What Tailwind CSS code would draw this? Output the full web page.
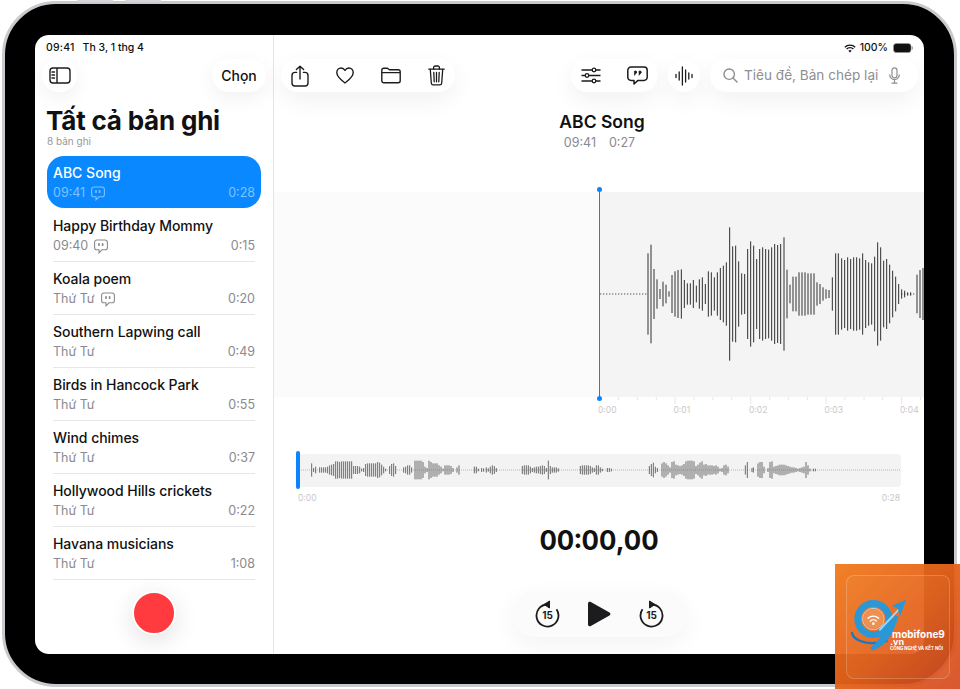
<!DOCTYPE html>
<html lang="vi">
<head>
<meta charset="utf-8">
<title>Ghi âm</title>
<script src="https://cdn.jsdelivr.net/npm/@tailwindcss/browser@4"></script>
</head>
<body class="bg-white font-['Inter','Noto_Sans',sans-serif] text-[#111]">
<div class="relative w-[960px] h-[689px] overflow-hidden">
  <div class="absolute left-[77px] top-0 w-[36px] h-[2px] bg-[#d6d6da]"></div>
  <div class="absolute left-[125px] top-0 w-[36px] h-[2px] bg-[#d6d6da]"></div>

  <div class="ml-[2px] mt-[1px] w-[955px] h-[686px] rounded-[54px] border-[3px] border-[#c9c9ce] bg-black pl-[30px] pt-[31px]">
    <div class="flex w-[889px] h-[619px] rounded-[14px] overflow-hidden bg-white">

      <!-- Sidebar -->
      <aside class="w-[239px] shrink-0 border-r border-[#e6e6e6] flex flex-col">
        <div class="h-[24px] pl-[11px] pt-[6px] flex gap-[8px] text-[10.5px] font-medium leading-[14px]">
          <span class="tracking-[0.2px]">09:41</span><span>Th 3, 1 thg 4</span>
        </div>
        <div class="h-[33px] pl-[7px] pr-[7px] flex justify-between">
          <button class="w-[35px] h-[33px] rounded-full bg-white shadow-[0_6px_20px_rgba(0,0,0,0.06)] flex items-center justify-center">
            <svg width="22" height="17" viewBox="0 0 22 17" fill="none" stroke="#1c1c1e" stroke-width="1.4"><rect x="1" y="1" width="20" height="15" rx="3"/><path d="M8 1V16"/><path d="M3 5H5.5M3 8H5.5M3 11H5.5" stroke-linecap="round"/></svg>
          </button>
          <button class="w-[54px] h-[33px] rounded-full bg-white shadow-[0_6px_20px_rgba(0,0,0,0.06)] text-[14px] font-medium">Chọn</button>
        </div>
        <h1 class="mt-[14px] ml-[11px] text-[26px] leading-[30px] font-bold tracking-[-0.2px] whitespace-nowrap">Tất cả bản ghi</h1>
        <p class="ml-[12px] text-[10px] leading-[10px] text-[#999]">8 bản ghi</p>

        <ul class="mt-[10px] mx-[12px] w-[214px]">
          <li class="h-[53px]">
            <div class="h-[52px] rounded-[17px] bg-[#0a88ff] pl-[6px] pr-[6px] pt-[8px]">
              <div class="text-[14px] leading-[18px] font-medium text-white">ABC Song</div>
              <div class="flex items-center mt-[2px] h-[18px] text-[12.5px] text-[#80c2ff]">
                <span>09:41</span>
                <svg class="ml-[6px]" width="14" height="15" viewBox="0 0 14 15" fill="none" stroke="#80c2ff" stroke-width="1.1"><path d="M3 1H11A2.4 2.4 0 0 1 13.4 3.4V8.4A2.4 2.4 0 0 1 11 10.8H8L5 13.8V10.8H3A2.4 2.4 0 0 1 .6 8.4V3.4A2.4 2.4 0 0 1 3 1Z"/><path d="M5 4.8V6.200M8.6 4.8V6.200" stroke-width="1.7" stroke-linecap="round"/></svg>
                <span class="ml-auto">0:28</span>
              </div>
            </div>
          </li>
          <li class="h-[53px] px-[6px]">
            <div class="h-full border-b border-[#e6e6e6] pt-[8px]">
              <div class="text-[14px] leading-[18px] font-medium tracking-[-0.05px]">Happy Birthday Mommy</div>
              <div class="flex items-center mt-[2px] h-[18px] text-[12.5px] text-[#8a8a8e]">
                <span>09:40</span>
                <svg class="ml-[6px]" width="14" height="15" viewBox="0 0 14 15" fill="none" stroke="#8a8a8e" stroke-width="1.1"><path d="M3 1H11A2.4 2.4 0 0 1 13.4 3.4V8.4A2.4 2.4 0 0 1 11 10.8H8L5 13.8V10.8H3A2.4 2.4 0 0 1 .6 8.4V3.4A2.4 2.4 0 0 1 3 1Z"/><path d="M5 4.8V6.200M8.6 4.8V6.200" stroke-width="1.7" stroke-linecap="round"/></svg>
                <span class="ml-auto">0:15</span>
              </div>
            </div>
          </li>
          <li class="h-[53px] px-[6px]">
            <div class="h-full border-b border-[#e6e6e6] pt-[8px]">
              <div class="text-[14px] leading-[18px] font-medium tracking-[-0.05px]">Koala poem</div>
              <div class="flex items-center mt-[2px] h-[18px] text-[12.5px] text-[#8a8a8e]">
                <span>Thứ Tư</span>
                <svg class="ml-[6px]" width="14" height="15" viewBox="0 0 14 15" fill="none" stroke="#8a8a8e" stroke-width="1.1"><path d="M3 1H11A2.4 2.4 0 0 1 13.4 3.4V8.4A2.4 2.4 0 0 1 11 10.8H8L5 13.8V10.8H3A2.4 2.4 0 0 1 .6 8.4V3.4A2.4 2.4 0 0 1 3 1Z"/><path d="M5 4.8V6.200M8.6 4.8V6.200" stroke-width="1.7" stroke-linecap="round"/></svg>
                <span class="ml-auto">0:20</span>
              </div>
            </div>
          </li>
          <li class="h-[53px] px-[6px]">
            <div class="h-full border-b border-[#e6e6e6] pt-[8px]">
              <div class="text-[14px] leading-[18px] font-medium tracking-[-0.05px]">Southern Lapwing call</div>
              <div class="flex items-center justify-between mt-[2px] h-[18px] text-[12.5px] text-[#8a8a8e]"><span>Thứ Tư</span><span>0:49</span></div>
            </div>
          </li>
          <li class="h-[53px] px-[6px]">
            <div class="h-full border-b border-[#e6e6e6] pt-[8px]">
              <div class="text-[14px] leading-[18px] font-medium tracking-[-0.05px]">Birds in Hancock Park</div>
              <div class="flex items-center justify-between mt-[2px] h-[18px] text-[12.5px] text-[#8a8a8e]"><span>Thứ Tư</span><span>0:55</span></div>
            </div>
          </li>
          <li class="h-[53px] px-[6px]">
            <div class="h-full border-b border-[#e6e6e6] pt-[8px]">
              <div class="text-[14px] leading-[18px] font-medium tracking-[-0.05px]">Wind chimes</div>
              <div class="flex items-center justify-between mt-[2px] h-[18px] text-[12.5px] text-[#8a8a8e]"><span>Thứ Tư</span><span>0:37</span></div>
            </div>
          </li>
          <li class="h-[53px] px-[6px]">
            <div class="h-full border-b border-[#e6e6e6] pt-[8px]">
              <div class="text-[14px] leading-[18px] font-medium tracking-[-0.05px]">Hollywood Hills crickets</div>
              <div class="flex items-center justify-between mt-[2px] h-[18px] text-[12.5px] text-[#8a8a8e]"><span>Thứ Tư</span><span>0:22</span></div>
            </div>
          </li>
          <li class="h-[53px] px-[6px]">
            <div class="h-full border-b border-[#e6e6e6] pt-[8px]">
              <div class="text-[14px] leading-[18px] font-medium tracking-[-0.05px]">Havana musicians</div>
              <div class="flex items-center justify-between mt-[2px] h-[18px] text-[12.5px] text-[#8a8a8e]"><span>Thứ Tư</span><span>1:08</span></div>
            </div>
          </li>
        </ul>
        <div class="flex justify-center pt-[11px]">
          <button class="w-[44px] h-[44px] rounded-full bg-[#ff3b40] border-2 border-white shadow-[0_6px_24px_rgba(0,0,0,0.12)]"></button>
        </div>
      </aside>

      <!-- Main -->
      <main class="flex-1 flex flex-col min-w-0">
        <div class="h-[24px] pt-[2px] pr-[11px] flex items-center justify-end gap-[3px] text-[10.5px] font-medium">
          <svg width="12" height="9" viewBox="0 0 12 9" fill="none" stroke="#111" stroke-width="1.3"><path d="M.8 3.2A7.4 7.4 0 0 1 11.2 3.2"/><path d="M2.6 5A4.8 4.8 0 0 1 9.4 5"/><path d="M6 8.6 4.4 6.8A2.2 2.2 0 0 1 7.6 6.8Z" fill="#111" stroke="none"/></svg>
          <span class="leading-[14px] ml-[1px]">100%</span>
          <svg class="ml-[2px]" width="20" height="10" viewBox="0 0 20 10"><rect x=".5" y=".5" width="17.5" height="9" rx="2.8" fill="#111" stroke="#999" stroke-width=".6"/><rect x="18.6" y="3.3" width="1.2" height="3.4" rx=".6" fill="#999"/></svg>
        </div>

        <div class="h-[33px] pl-[7px] pr-[6px] flex">
          <div class="w-[174px] h-[33px] rounded-full bg-white px-[10px] flex items-center justify-between shadow-[0_8px_24px_rgba(0,0,0,0.06)]">
            <svg width="18" height="22" viewBox="0 0 18 22" fill="none" stroke="#1c1c1e" stroke-width="1.4" stroke-linecap="round" stroke-linejoin="round"><path d="M5.6 7.4H4A3 3 0 0 0 1 10.4V18A3 3 0 0 0 4 21H14A3 3 0 0 0 17 18V10.4A3 3 0 0 0 14 7.4H12.4"/><path d="M9 14V1.4M5.4 4.6 9 1.2 12.6 4.6"/></svg>
            <svg width="18" height="17" viewBox="0 0 18 17" fill="none" stroke="#1c1c1e" stroke-width="1.4" stroke-linejoin="round"><path d="M9 16C5.5 13.4.8 10.2.8 5.6.8 2.9 2.8 1 5.1 1 6.9 1 8.2 2 9 3.5 9.8 2 11.100 1 12.900 1 15.200 1 17.200 2.900 17.200 5.600 17.200 10.200 12.500 13.400 9 16Z"/></svg>
            <svg width="20" height="17" viewBox="0 0 20 17" fill="none" stroke="#1c1c1e" stroke-width="1.4" stroke-linejoin="round"><path d="M.8 3.200A2 2 0 0 1 2.800 1.200H6.400L8.400 2.800H17.200A2 2 0 0 1 19.200 4.800V13.800A2 2 0 0 1 17.200 15.800H2.800A2 2 0 0 1 .8 13.800Z"/><path d="M.8 5.600H19.200"/></svg>
            <svg width="17" height="21" viewBox="0 0 17 21" fill="none" stroke="#1c1c1e" stroke-width="1.3" stroke-linecap="round" stroke-linejoin="round"><path d="M.8 4.200H16.200"/><path d="M5.600 4V2.600A1.600 1.600 0 0 1 7.200 1H9.800A1.600 1.600 0 0 1 11.400 2.600V4"/><path d="M2.300 4.400 3.300 18A2 2 0 0 0 5.300 19.900H11.700A2 2 0 0 0 13.700 18L14.700 4.400"/><path d="M5.800 7.500 6.200 16.800M8.500 7.500V16.800M11.200 7.500 10.800 16.800"/></svg>
          </div>
          <div class="ml-auto w-[87px] h-[33px] rounded-full bg-white px-[10px] flex items-center justify-between shadow-[0_8px_24px_rgba(0,0,0,0.06)]">
            <svg width="20" height="17" viewBox="0 0 20 17" fill="none" stroke="#1c1c1e" stroke-width="1.3"><path d="M.5 3H11.200M14.800 3H19.500M.5 8.500H4.200M7.800 8.500H19.500M.5 14H11.200M14.800 14H19.500"/><circle cx="13" cy="3" r="1.800"/><circle cx="6" cy="8.500" r="1.800"/><circle cx="13" cy="14" r="1.800"/></svg>
            <svg width="21" height="19" viewBox="0 0 21 19" fill="none" stroke="#1c1c1e" stroke-width="1.5" stroke-linejoin="round"><path d="M4 1H17A3.200 3.200 0 0 1 20.200 4.200V11.200A3.200 3.200 0 0 1 17 14.400H11L7 18V14.400H4A3.200 3.200 0 0 1 .8 11.200V4.200A3.200 3.200 0 0 1 4 1Z"/><path d="M7.200 6.200A1.200 1.200 0 1 1 8.600 7.400C8.500 8.200 8 8.800 7.200 9.200M11.800 6.200A1.200 1.200 0 1 1 13.200 7.400C13.100 8.200 12.600 8.800 11.800 9.200" fill="#1c1c1e" stroke-width="1"/></svg>
          </div>
          <div class="ml-[10px] w-[32px] h-[33px] rounded-full bg-white flex items-center justify-center shadow-[0_8px_24px_rgba(0,0,0,0.06)]">
            <svg width="18" height="20" viewBox="0 0 18 20" fill="none" stroke="#1c1c1e" stroke-width="1.300" stroke-linecap="round"><path d="M1 8.500V11.500M4.200 6V14M7.400 1V19M10.600 4V16M13.800 7V13M17 8.500V11.500"/></svg>
          </div>
          <div class="ml-[10px] w-[208px] h-[33px] rounded-full bg-white pl-[13px] pr-[18px] flex items-center shadow-[0_8px_24px_rgba(0,0,0,0.06)]">
            <svg width="15" height="15" viewBox="0 0 15 15" fill="none" stroke="#8e8e93" stroke-width="1.400" stroke-linecap="round"><circle cx="6.200" cy="6.200" r="5.200"/><path d="M10 10 14 14"/></svg>
            <span class="ml-[6px] text-[13.6px] text-[#8e8e93] whitespace-nowrap">Tiêu đề, Bản chép lại</span>
            <svg class="ml-auto" width="11" height="17" viewBox="0 0 11 17" fill="none" stroke="#8e8e93" stroke-width="1.200" stroke-linecap="round"><rect x="3" y=".8" width="5" height="10" rx="2.500"/><path d="M.7 7.800A4.800 4.800 0 0 0 10.300 7.800M5.500 12.800V16M3 16.200H8"/></svg>
          </div>
        </div>

        <div class="pl-[6px] mt-[18px] text-center text-[17.5px] leading-[24px] font-semibold">ABC Song</div>
        <div class="mt-[2px] flex justify-center gap-[13px] text-[12.5px] leading-[14px] text-[#8a8a8e] pl-[1px]">
          <span>09:41</span><span>0:27</span>
        </div>

        <!-- Waveform -->
        <div class="relative mt-[42px] h-[205px] flex">
          <div class="w-[326px] bg-[#fbfbfb]"></div>
          <div class="flex-1 bg-[#f4f4f4] overflow-hidden">
            <svg width="324" height="205" viewBox="30 36 972 615" fill="none">
              <path d="M30 342H170" stroke="#555" stroke-width="3" stroke-dasharray="4 5"/>
              <path d="M933 342H975" stroke="#555" stroke-width="3" stroke-dasharray="4 5"/>
              <path stroke="#303030" stroke-width="3" d="M174 220V464M183 194V490M192 267V417M201 298V386M210 327V357M219 305V379M228 314V370M237 334V350M246 285V399M255 274V410M264 270V414M274 268V416M283 300V384M292 310V374M301 310V374M310 300V384M319 317V367M328 298V386M337 292V392M346 312V372M355 274V410M364 277V407M373 292V392M382 277V407M391 264V420M400 257V427M409 247V437M419 142V542M428 199V485M437 197V487M446 244V440M455 280V404M464 282V402M473 207V477M482 184V500M491 197V487M500 237V447M509 207V477M518 202V482M527 207V477M536 209V475M545 202V482M554 192V492M563 195V489M572 192V492M582 172V512M591 269V415M600 314V370M609 290V394M618 290V394M627 277V407M636 277V407M645 277V407M654 280V404M663 280V404M672 280V404M681 307V377M690 312V372M699 322V362M708 328V356M717 330V354M727 292V392M737 220V464M745 220V464M755 235V449M764 240V444M773 232V452M782 237V447M791 232V452M800 232V452M809 235V449M818 220V464M827 240V444M836 247V437M845 250V434M854 230V454M863 187V497M872 202V482M881 242V442M890 237V447M899 254V430M908 272V412M917 290V394M926 312V372M935 328V356M944 332V352M953 337V347M962 337V347M981 284V400M990 270V414M999 264V420"/>
            </svg>
          </div>
          <div class="absolute left-[325px] -top-[3px] h-[210px] w-[1px] bg-[#0a84ff]">
            <div class="absolute -left-[2px] -top-[2px] w-[5px] h-[5px] rounded-full bg-[#0a84ff]"></div>
            <div class="absolute -left-[2px] -bottom-[2px] w-[5px] h-[5px] rounded-full bg-[#0a84ff]"></div>
          </div>
        </div>

        <!-- Ruler -->
        <div class="relative h-[21px] pl-[324px] pt-[8px] flex text-[8.500px] leading-[10px] text-[#c8c8c8] overflow-hidden">
          <svg class="absolute left-[326px] top-0" width="324" height="7" viewBox="30 651 972 21" fill="none" stroke="#e6e6e6" stroke-width="3"><path d="M85 651V660M142 651V660M199 651V660M255 651V672M312 651V660M369 651V660M425 651V660M482 651V672M539 651V660M595 651V660M652 651V660M708 651V672M765 651V660M822 651V660M878 651V660M935 651V672M992 651V660"/></svg>
          <span class="w-[75.500px] shrink-0">0:00</span>
          <span class="w-[75.500px] shrink-0">0:01</span>
          <span class="w-[75.500px] shrink-0">0:02</span>
          <span class="w-[75.500px] shrink-0">0:03</span>
          <span class="w-[25px] shrink-0">0:04</span>
        </div>

        <!-- Overview -->
        <div class="relative mt-[36px] mx-[23px] h-[33px] rounded-[4px] bg-[#f3f3f3]">
          <svg width="604" height="33" viewBox="36 42 1812 99" fill="none">
            <path d="M48 90H1845" stroke="#777" stroke-width="1.500" stroke-dasharray="3 3"/>
            <path stroke="#5e5e5e" stroke-width="2.700" d="M80 70V110M86 84V96M92 80V100M104 82V98M110 82V98M116 82V98M122 82V98M128 80V100M134 76V104M140 74V106M146 72V108M152 64V116M158 64V116M164 66V114M170 64V116M176 64V116M182 64V116M188 64V116M194 64V116M200 64V116M206 78V102M212 78V102M218 78V102M224 80V100M230 86V94M236 84V96M242 72V108M248 70V110M254 70V110M260 70V110M266 70V110M272 70V110M278 66V114M284 68V112M290 74V106M296 80V100M302 86V94M314 78V102M320 72V108M326 70V110M332 78V102M356 82V98M362 80V100M368 76V104M374 76V104M380 82V98M390 62V118M396 62V118M402 62V118M408 62V118M414 66V114M420 80V100M426 84V96M432 62V118M438 66V114M444 70V110M450 70V110M456 70V110M462 76V104M468 80V100M474 86V94M480 76V104M486 76V104M492 76V104M498 78V102M504 84V96M516 82V98M522 76V104M568 80V100M574 80V100M580 86V94M590 84V96M596 85V95M604 82V98M610 85V95M616 80V100M622 76V104M628 78V102M634 84V96M712 78V102M718 76V104M724 76V104M730 76V104M736 80V100M742 84V96M748 82V98M754 80V100M760 80V100M766 78V102M772 76V104M778 78V102M784 84V96M790 62V118M796 78V102M802 82V98M808 82V98M814 82V98M820 85V95M886 78V102M892 76V104M898 76V104M904 76V104M910 76V104M916 78V102M922 82V98M928 84V96M934 76V104M940 76V104M946 82V98M952 86V94M967 84V96M973 84V96M979 86V94M1093 78V102M1099 72V108M1105 68V112M1111 80V100M1117 84V96M1131 70V110M1137 66V114M1143 70V110M1149 76V104M1155 82V98M1161 66V114M1167 64V116M1173 74V106M1179 76V104M1185 78V102M1191 76V104M1197 72V108M1203 64V116M1209 62V118M1215 62V118M1221 62V118M1227 64V116M1233 78V102M1239 74V106M1245 68V112M1251 64V116M1257 74V106M1263 72V108M1269 76V104M1275 76V104M1281 76V104M1287 78V102M1293 76V104M1299 80V100M1305 86V94M1311 84V96M1317 76V104M1323 74V106M1329 80V100M1381 76V104M1387 66V114M1401 84V96M1405 82V98M1419 70V110M1425 66V114M1431 66V114M1437 80V100M1449 84V96M1455 66V114M1461 64V116M1467 80V100M1473 78V102M1479 76V104M1485 74V106M1491 74V106M1497 74V106M1503 76V104M1509 78V102M1515 80V100M1521 82V98M1527 82V98M1533 84V96M1539 86V94M1545 84V96M1551 82V98M1557 80V100M1563 66V114M1569 76V104M1575 86V94M1585 86V94M1591 86V94"/>
          </svg>
          <div class="absolute -left-[1px] -top-[3px] w-[4px] h-[38px] rounded-full bg-[#0a84ff]"></div>
        </div>
        <div class="mt-[5px] mx-[24px] flex justify-between text-[8.500px] leading-[12px] text-[#c8c8c8]">
          <span>0:00</span><span>0:28</span>
        </div>

        <div class="mt-[20px] text-center text-[27px] leading-[34px] font-bold tabular-nums">00:00,00</div>

        <div class="mt-[33px] mx-auto w-[175px] h-[46px] rounded-full bg-[#fbfbfb] shadow-[0_8px_24px_rgba(0,0,0,0.05)] pl-[23px] pr-[23px] flex items-center justify-between">
          <svg width="25" height="28" viewBox="0 0 25 28" fill="none" stroke="#1c1c1e" stroke-width="1.800"><path d="M12.500 4.500A11 11 0 1 0 21.500 9.200"/><path d="M9 4.500 14.500 1V8Z" fill="#1c1c1e" stroke-linejoin="round" stroke-width="1"/><text x="12.500" y="19" text-anchor="middle" font-size="10" font-weight="700" fill="#1c1c1e" stroke="none">15</text></svg>
          <svg width="24" height="26" viewBox="0 0 24 26"><path d="M1 2.500C1 1 2.500.3 3.800 1L22.500 11.500C23.800 12.200 23.800 13.800 22.500 14.500L3.800 25C2.500 25.700 1 25 1 23.500Z" fill="#1c1c1e"/></svg>
          <svg width="25" height="28" viewBox="0 0 25 28" fill="none" stroke="#1c1c1e" stroke-width="1.800"><path d="M12.500 4.500A11 11 0 1 1 3.500 9.200"/><path d="M16 4.500 10.500 1V8Z" fill="#1c1c1e" stroke-linejoin="round" stroke-width="1"/><text x="12.500" y="19" text-anchor="middle" font-size="10" font-weight="700" fill="#1c1c1e" stroke="none">15</text></svg>
        </div>
      </main>
    </div>
  </div>

  <!-- Watermark badge -->
  <div class="absolute left-[835px] top-[564px] w-[125px] h-[125px] bg-linear-to-br from-[#f07a1c]/95 via-[#e5621a]/95 to-[#d4451a]/90">
    <div class="absolute left-[11px] top-[11px] w-[104px] h-[104px] rounded-[8px] border border-white/20 bg-white/[0.03]"></div>
    <svg class="absolute left-0 top-0" width="125" height="125" viewBox="15 15 375 375" fill="none">
      <path d="M66 222C70 245 115 262 170 246" stroke="#1d78bd" stroke-width="7" stroke-linecap="round"/>
      <circle cx="130" cy="180" r="47" stroke="#2a98d6" stroke-width="20"/>
      <circle cx="130" cy="180" r="32" stroke="#bfe6f7" stroke-width="2.500"/>
      <circle cx="130" cy="180" r="30" fill="#ee9150"/>
      <path d="M114 178A23 23 0 0 1 146 178M121 186A12 12 0 0 1 139 186" stroke="#fff" stroke-width="4" stroke-linecap="round"/>
      <circle cx="130" cy="194" r="4" fill="#fff"/>
      <path d="M177 186C172 220 150 250 128 268C165 254 184 222 200 170" stroke="#2a98d6" stroke-width="12" stroke-linejoin="round" fill="#2a98d6"/>
      <path d="M150 212 206 152" stroke="#9fd8f2" stroke-width="6" stroke-linecap="round"/>
      <path d="M229 122 186 140 204 150 210 172Z" fill="#2a98d6"/>
    </svg>
    <div class="absolute left-[57px] top-[66px] text-[10px] leading-[9px] font-bold text-white whitespace-nowrap">mobifone9</div>
    <div class="absolute left-[55px] top-[75px] text-[9px] leading-[6px] font-bold text-white">.vn</div>
    <div class="absolute left-[55px] top-[82px] text-[4.400px] leading-[5px] font-bold text-white whitespace-nowrap">CÔNG NGHỆ VÀ KẾT NỐI</div>
  </div>
</div>
</body>
</html>
